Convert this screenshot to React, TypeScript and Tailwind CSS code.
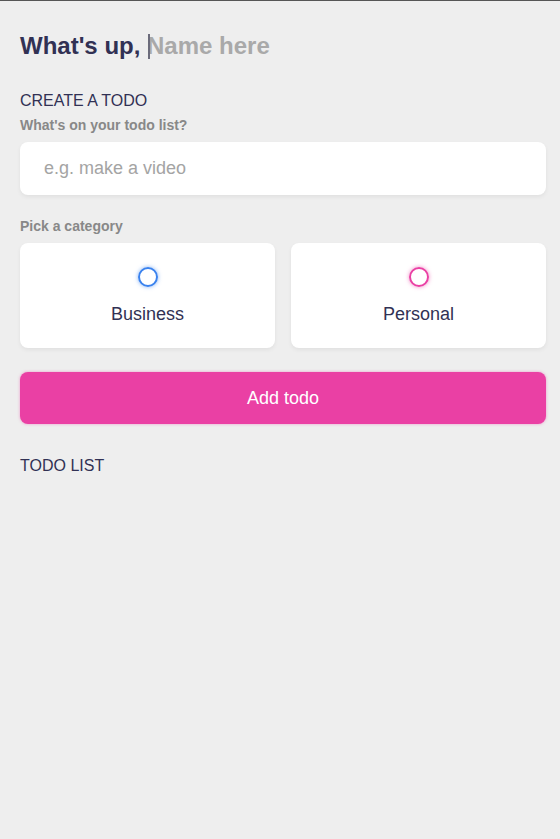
import React, { useState } from "react";

export default function App() {
  const [category, setCategory] = useState("");
  const [content, setContent] = useState("");

  return (
    <div
      className="min-h-[839px] bg-[#eeeeee] border-t border-[#555555] pl-5 pr-[14px] text-[#313154]"
      style={{ fontFamily: '"Liberation Sans", Arial, sans-serif' }}
    >
      {/* Greeting */}
      <section className="pt-[29px] flex items-center">
        <h2 className="text-2xl font-bold leading-[32px] whitespace-nowrap">What's up,&nbsp;</h2>
        <div className="relative flex items-center">
          <span className="absolute left-[1px] top-[4px] w-[1.5px] h-[25px] bg-[#6b6b7b]"></span>
          <input
            type="text"
            placeholder="Name here"
            className="bg-transparent outline-none text-2xl font-bold leading-[32px] w-[300px] placeholder-[#a9a9a9] text-[#313154]"
          />
        </div>
      </section>

      {/* Create todo */}
      <section className="mt-[29px]">
        <h3 className="text-base leading-5 uppercase">Create a todo</h3>
        <form onSubmit={(e) => e.preventDefault()}>
          <h4 className="mt-[6px] text-sm font-bold text-[#888888] leading-4">What's on your todo list?</h4>
          <input
            type="text"
            placeholder="e.g. make a video"
            value={content}
            onChange={(e) => setContent(e.target.value)}
            className="mt-[9px] block w-full h-[53px] px-6 bg-white rounded-lg text-lg text-[#313154] placeholder-[#a4a4a4] outline-none shadow-[0_2px_4px_rgba(0,0,0,0.06)]"
          />

          <h4 className="mt-[23px] text-sm font-bold text-[#888888] leading-4">Pick a category</h4>
          <div className="mt-[9px] grid grid-cols-2 gap-4">
            {/* Business */}
            <label className="h-[105px] bg-white rounded-lg shadow-[0_2px_4px_rgba(0,0,0,0.06)] flex flex-col items-center cursor-pointer">
              <input
                type="radio"
                name="category"
                value="business"
                checked={category === "business"}
                onChange={() => setCategory("business")}
                className="hidden"
              />
              <span className="mt-[24px] w-5 h-5 rounded-full border-2 border-[#3a82ee] shadow-[0_0_4px_rgba(58,130,238,0.6)]"></span>
              <span className="mt-[17px] text-lg leading-5">Business</span>
            </label>

            {/* Personal */}
            <label className="h-[105px] bg-white rounded-lg shadow-[0_2px_4px_rgba(0,0,0,0.06)] flex flex-col items-center cursor-pointer">
              <input
                type="radio"
                name="category"
                value="personal"
                checked={category === "personal"}
                onChange={() => setCategory("personal")}
                className="hidden"
              />
              <span className="mt-[24px] w-5 h-5 rounded-full border-2 border-[#ea40a4] shadow-[0_0_4px_rgba(234,64,164,0.6)]"></span>
              <span className="mt-[17px] text-lg leading-5">Personal</span>
            </label>
          </div>

          <button
            type="submit"
            className="mt-6 block w-full h-[52px] rounded-lg bg-[#ea40a4] text-white text-lg shadow-[0_0_3px_rgba(234,64,164,0.5)]"
          >
            Add todo
          </button>
        </form>
      </section>

      {/* Todo list */}
      <section className="mt-[32px]">
        <h3 className="text-base leading-5 uppercase">Todo list</h3>
      </section>
    </div>
  );
}
